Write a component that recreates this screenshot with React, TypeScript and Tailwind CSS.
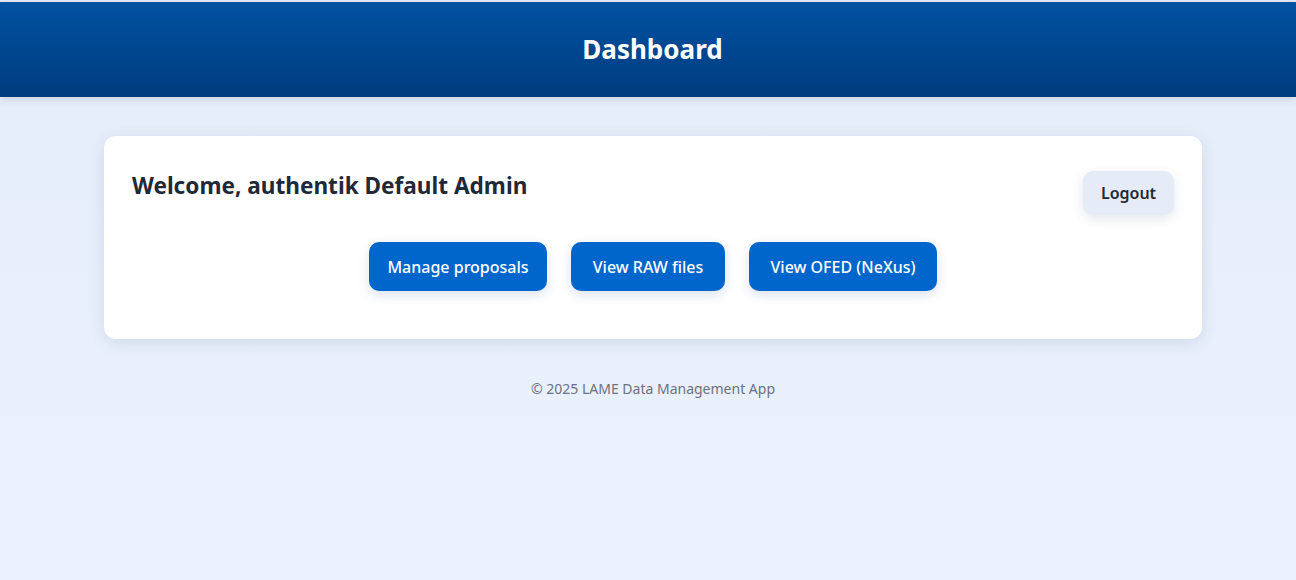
const ACTIONS = [
  { label: "Manage proposals", width: "w-[178px]" },
  { label: "View RAW files", width: "w-[154px]" },
  { label: "View OFED (NeXus)", width: "w-[188px]" },
];

export default function App() {
  return (
    <div className="min-h-[580px] bg-gradient-to-b from-[#e5edf9] to-[#ebf2fd] pt-[2px] font-['Noto_Sans',sans-serif]">
      <header className="flex h-[95px] items-center justify-center bg-gradient-to-b from-[#0052a3] to-[#003c7e] pl-[9px] shadow-[0_2px_8px_rgba(0,40,100,0.15)]">
        <h1 className="text-[26px] font-bold text-white">Dashboard</h1>
      </header>

      <main className="pl-[104px] pr-[94px] pt-[39px]">
        <section className="rounded-xl bg-white px-7 pb-12 pt-9 shadow-[0_4px_16px_rgba(30,60,120,0.12)]">
          <div className="flex items-start justify-between">
            <h2 className="text-[22.6px] font-bold leading-[28px] text-[#1f2937]">
              Welcome, authentik Default Admin
            </h2>
            <button
              type="button"
              className="mt-[-1px] h-11 w-[91px] rounded-[10px] bg-[#e5ecf7] text-base font-semibold text-[#1f2937] shadow-[0_4px_12px_rgba(30,60,120,0.12)]"
            >
              Logout
            </button>
          </div>

          <div className="mt-[27px] flex justify-center gap-6">
            {ACTIONS.map((item) => (
              <button
                key={item.label}
                type="button"
                className={`h-[49px] rounded-[10px] bg-[#0066cc] text-base font-medium text-white shadow-[0_4px_12px_rgba(0,60,140,0.15)] ${item.width}`}
              >
                {item.label}
              </button>
            ))}
          </div>
        </section>

        <footer className="pt-[40px] text-center text-sm text-[#6b7280]">
          © 2025 LAME Data Management App
        </footer>
      </main>
    </div>
  );
}
